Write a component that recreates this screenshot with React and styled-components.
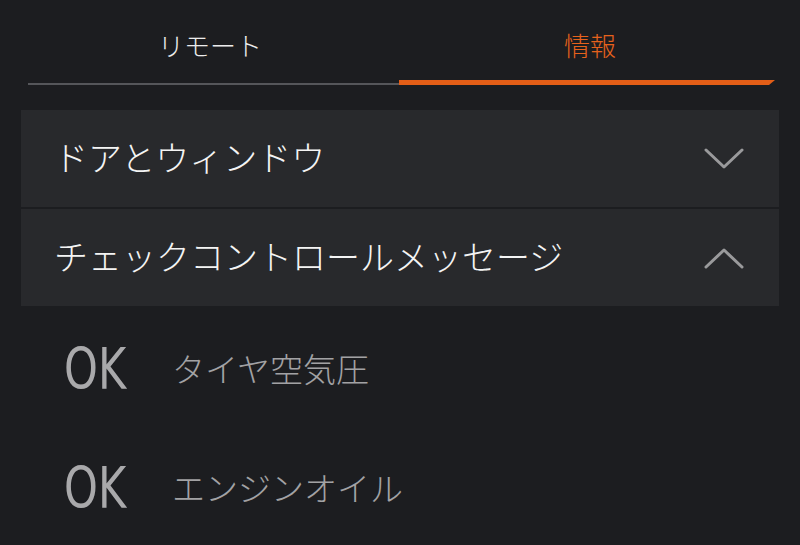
import React from 'react';
import styled, { createGlobalStyle } from 'styled-components';

const tabs = [
  { id: 'remote', label: 'リモート' },
  { id: 'info', label: '情報', active: true },
];

const sections = [
  { id: 'doors', title: 'ドアとウィンドウ', open: false },
  { id: 'check', title: 'チェックコントロールメッセージ', open: true },
];

const statusItems = [
  { id: 'tire', status: 'OK', label: 'タイヤ空気圧' },
  { id: 'oil', status: 'OK', label: 'エンジンオイル' },
];

function Chevron({ up }) {
  return (
    <ChevronIcon width="40" height="22" viewBox="0 0 40 22">
      <polyline
        points={up ? '2,20 20,3 38,20' : '2,2 20,19 38,2'}
        fill="none"
        stroke="#9a9a9c"
        strokeWidth="3"
        strokeLinecap="round"
        strokeLinejoin="round"
      />
    </ChevronIcon>
  );
}

function App() {
  return (
    <>
      <GlobalStyle />
      <Screen>
        <TabBar>
          <TabRow>
            {tabs.map((t) => (
              <Tab key={t.id} $active={t.active}>
                {t.label}
              </Tab>
            ))}
          </TabRow>
          <Indicator>
            <Track />
            <ActiveBar />
          </Indicator>
        </TabBar>

        <Sections>
          {sections.map((s) => (
            <SectionHeader key={s.id}>
              <SectionTitle>{s.title}</SectionTitle>
              <Chevron up={s.open} />
            </SectionHeader>
          ))}
        </Sections>

        <StatusList>
          {statusItems.map((item) => (
            <StatusRow key={item.id}>
              <StatusBadge>
                <StatusText>{item.status}</StatusText>
              </StatusBadge>
              <StatusLabel>{item.label}</StatusLabel>
            </StatusRow>
          ))}
        </StatusList>
      </Screen>
    </>
  );
}

export default App;

const GlobalStyle = createGlobalStyle`
  html, body {
    margin: 0;
    padding: 0;
    background: #1c1d20;
  }
  body {
    font-family: "Noto Sans CJK JP", "Noto Sans", sans-serif;
  }
`;

const Screen = styled.div`
  width: 800px;
  height: 545px;
  overflow: hidden;
  background: #1c1d20;
`;

const TabBar = styled.div`
  padding: 0 20px;
`;

const TabRow = styled.div`
  display: flex;
  height: 80px;
`;

const Tab = styled.div`
  flex: 1;
  display: flex;
  align-items: center;
  justify-content: center;
  padding-top: 9px;
  box-sizing: border-box;
  font-size: 26px;
  font-weight: 300;
  color: ${(p) => (p.$active ? '#e6621c' : '#ececec')};
`;

const Indicator = styled.div`
  display: flex;
  align-items: flex-end;
  height: 5px;
  padding: 0 5px 0 8px;
`;

const Track = styled.div`
  flex: 1;
  height: 2px;
  background: #55565a;
`;

const ActiveBar = styled.div`
  width: 376px;
  height: 5px;
  background: #e35e17;
  clip-path: polygon(0 0, 100% 0, 98.4% 100%, 0 100%);
`;

const Sections = styled.div`
  margin: 25px 21px 0;
  display: flex;
  flex-direction: column;
  gap: 2px;
`;

const SectionHeader = styled.div`
  height: 97px;
  display: flex;
  align-items: center;
  justify-content: space-between;
  padding: 0 35px 0 33px;
  background: #28292c;
`;

const SectionTitle = styled.span`
  font-size: 34px;
  font-weight: 300;
  color: #f4f4f4;
  padding-bottom: 4px;
`;

const ChevronIcon = styled.svg`
  display: block;
`;

const StatusList = styled.div`
  padding: 4px 0 0 64px;
`;

const StatusRow = styled.div`
  height: 119px;
  display: flex;
  align-items: center;
`;

const StatusBadge = styled.div`
  width: 108px;
  display: flex;
`;

const StatusText = styled.span`
  display: inline-block;
  font-family: "Liberation Sans Narrow", "DejaVu Sans Condensed", "Liberation Sans", sans-serif;
  font-size: 57px;
  font-weight: 300;
  line-height: 1;
  color: #a9a9ab;
  transform: scaleX(0.84);
  transform-origin: left center;
`;

const StatusLabel = styled.span`
  font-size: 33px;
  font-weight: 300;
  color: #a2a2a4;
  padding-bottom: 4px;
`;
